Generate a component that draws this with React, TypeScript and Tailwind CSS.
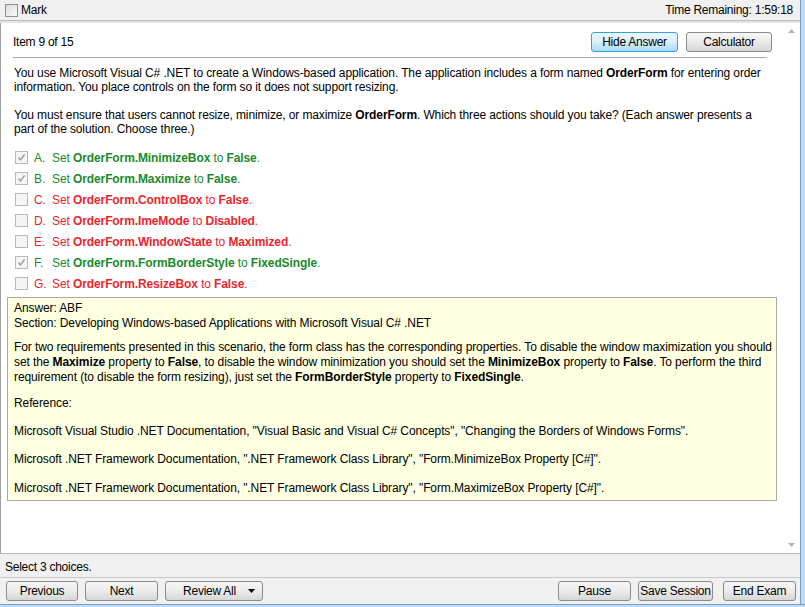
import React from "react";

function WinButton({ children, className = "", active = false }: { children: React.ReactNode; className?: string; active?: boolean }) {
  return (
    <div
      className={
        "h-[20px] flex items-center justify-center rounded-[3px] border text-[12px] text-black " +
        (active
          ? "border-[#3c9fd8] bg-gradient-to-b from-[#eaf6fd] via-[#d9f0fc] to-[#a7d9f5]"
          : "border-[#8a8a8a] bg-gradient-to-b from-[#f6f6f6] via-[#ebebeb] to-[#d6d6d6]") +
        " " +
        className
      }
    >
      {children}
    </div>
  );
}

function Check({ checked }: { checked: boolean }) {
  return (
    <div className="w-[13px] h-[13px] border border-[#b8b8b8] bg-[#f4f4f4] flex items-center justify-center shrink-0">
      {checked && (
        <svg width="9" height="9" viewBox="0 0 9 9">
          <path d="M1.5 4.5 L3.5 7 L7.5 1.5" fill="none" stroke="#9a9a9a" strokeWidth="1.3" />
        </svg>
      )}
    </div>
  );
}

const options: { l: string; ok: boolean; a: string; b: string }[] = [
  { l: "A.", ok: true, a: "OrderForm.MinimizeBox", b: "False" },
  { l: "B.", ok: true, a: "OrderForm.Maximize", b: "False" },
  { l: "C.", ok: false, a: "OrderForm.ControlBox", b: "False" },
  { l: "D.", ok: false, a: "OrderForm.ImeMode", b: "Disabled" },
  { l: "E.", ok: false, a: "OrderForm.WindowState", b: "Maximized" },
  { l: "F.", ok: true, a: "OrderForm.FormBorderStyle", b: "FixedSingle" },
  { l: "G.", ok: false, a: "OrderForm.ResizeBox", b: "False" },
];

export default function App() {
  return (
    <div className="w-[805px] h-[607px] flex flex-col bg-[#f0f0f0] font-['Liberation_Sans',Arial,sans-serif] text-[12px] tracking-[-0.25px] text-black overflow-hidden">
      <div className="flex-1 flex min-h-0">
        <div className="flex-1 flex flex-col min-w-0">
          {/* top bar */}
          <div className="h-[21px] flex items-center justify-between pl-[5px] pr-[7px] border-b border-[#bdbdbd] shrink-0">
            <div className="flex items-center gap-[3px]">
              <div className="w-[13px] h-[13px] border border-[#8e8f8f] bg-gradient-to-br from-[#dcdcdc] to-[#fafafa]" />
              <span className="text-[12px]">Mark</span>
            </div>
            <span>Time Remaining: 1:59:18</span>
          </div>
          <div className="h-[2px] bg-[#e3e3e3] shrink-0" />
          {/* main */}
          <div className="flex-1 flex border-l border-[#a0a0a0] border-b border-b-[#bcbcbc] bg-white min-h-0">
            <div className="flex-1 flex flex-col pl-[6px] pr-[6px] pt-[8px] min-w-0">
              <div className="flex items-center justify-between pl-[6px] pr-[5px] h-[21px]">
                <span>Item 9 of 15</span>
                <div className="flex gap-[8px]">
                  <WinButton active className="w-[87px]">Hide Answer</WinButton>
                  <WinButton className="w-[86px]">Calculator</WinButton>
                </div>
              </div>
              <div className="ml-[6px] mr-[10px] mt-[5px] border-t border-[#a8a8a8]" />
              <div className="pl-[7px] pr-[5px] mt-[8px] leading-[14px] tracking-[-0.12px]">
                <p>
                  You use Microsoft Visual C# .NET to create a Windows-based application. The application includes a form named{" "}
                  <b>OrderForm</b> for entering order information. You place controls on the form so it does not support resizing.
                </p>
                <p className="mt-[14px]">
                  You must ensure that users cannot resize, minimize, or maximize <b>OrderForm</b>. Which three actions should you take?
                  (Each answer presents a part of the solution. Choose three.)
                </p>
              </div>
              <div className="flex flex-col mt-[11px] pl-[8px] tracking-[-0.1px]">
                {options.map((o) => (
                  <div key={o.l} className="h-[21px] flex items-center">
                    <Check checked={o.ok} />
                    <div className={"flex ml-[6px] " + (o.ok ? "text-[#1b8a2c]" : "text-[#e8262c]")}>
                      <span className="w-[18px]">{o.l}</span>
                      <span>
                        Set <b>{o.a}</b> to <b>{o.b}</b>.
                      </span>
                    </div>
                  </div>
                ))}
              </div>
              <div className="mt-[3px] border border-[#aaaaaa] bg-[#ffffe1] pl-[6px] pr-[3px] pt-[3px] pb-[4px] leading-[15px] tracking-[-0.1px]">
                <p>Answer: ABF</p>
                <p>Section: Developing Windows-based Applications with Microsoft Visual C# .NET</p>
                <p className="mt-[9px]">
                  For two requirements presented in this scenario, the form class has the corresponding properties. To disable the window
                  maximization you should set the <b>Maximize</b> property to <b>False</b>, to disable the window minimization you should
                  set the <b>MinimizeBox</b> property to <b>False</b>. To perform the third requirement (to disable the form resizing),
                  just set the <b>FormBorderStyle</b> property to <b>FixedSingle</b>.
                </p>
                <p className="mt-[11px]">Reference:</p>
                <p className="mt-[13px]">
                  Microsoft Visual Studio .NET Documentation, "Visual Basic and Visual C# Concepts", "Changing the Borders of Windows Forms".
                </p>
                <p className="mt-[13px]">
                  Microsoft .NET Framework Documentation, ".NET Framework Class Library", "Form.MinimizeBox Property [C#]".
                </p>
                <p className="mt-[14px]">
                  Microsoft .NET Framework Documentation, ".NET Framework Class Library", "Form.MaximizeBox Property [C#]".
                </p>
              </div>
            </div>
            {/* scrollbar */}
            <div className="w-[17px] flex flex-col justify-between items-center bg-white py-[6px] shrink-0">
              <svg width="7" height="4" viewBox="0 0 7 4">
                <path d="M0 4 L3.5 0 L7 4 Z" fill="#b5b5b5" />
              </svg>
              <svg width="7" height="4" viewBox="0 0 7 4">
                <path d="M0 0 L3.5 4 L7 0 Z" fill="#b5b5b5" />
              </svg>
            </div>
          </div>
          {/* status */}
          <div className="h-[24px] flex items-center pl-[5px] pt-[2px] border-b border-[#c8c8c8] shrink-0">Select 3 choices.</div>
          <div className="h-[26px] flex items-center justify-between pl-[6px] pr-[4px] shrink-0">
            <div className="flex gap-[7px]">
              <WinButton className="w-[72px]">Previous</WinButton>
              <WinButton className="w-[73px]">Next</WinButton>
              <WinButton className="w-[98px] gap-[12px] pl-[10px]">
                <span>Review All</span>
                <svg width="7" height="4" viewBox="0 0 7 4">
                  <path d="M0 0 L3.5 4 L7 0 Z" fill="#000" />
                </svg>
              </WinButton>
            </div>
            <div className="flex">
              <WinButton className="w-[73px]">Pause</WinButton>
              <WinButton className="w-[75px] ml-[7px]">Save Session</WinButton>
              <WinButton className="w-[73px] ml-[10px]">End Exam</WinButton>
            </div>
          </div>
        </div>
        <div className="w-[5px] border-l border-[#7a9fc4] bg-[#c2d9ef] shrink-0" />
      </div>
      <div className="h-[3px] border-t border-[#7a9fc4] bg-[#c2d9ef] shrink-0" />
    </div>
  );
}
